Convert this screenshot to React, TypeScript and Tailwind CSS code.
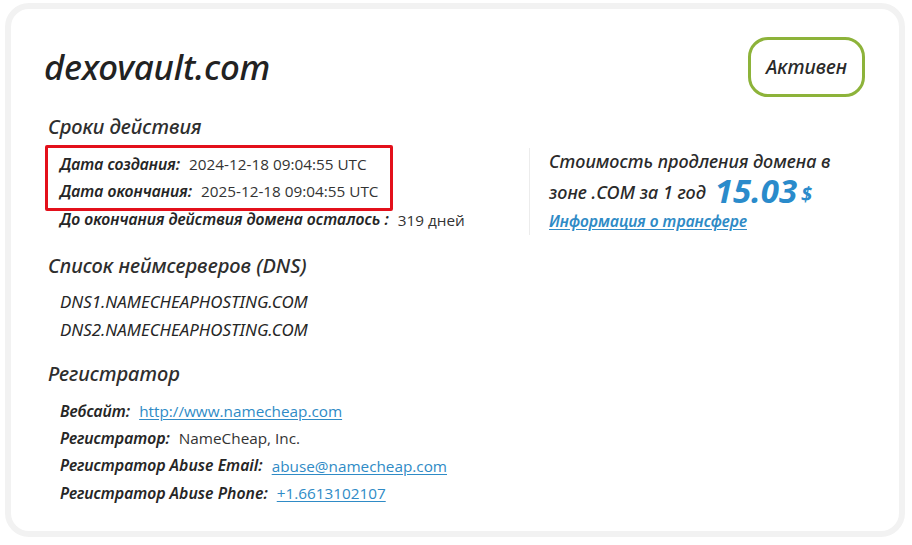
import React from "react";

type Row = { label: string; value: string; href?: boolean };

const labelCls =
  "font-['Noto_Sans',sans-serif] italic font-semibold text-[15.8px] text-[#262626]";
const valueCls = "font-['Open_Sans',sans-serif] text-[15.3px] text-[#333]";
const linkCls =
  "font-['Open_Sans',sans-serif] text-[15.3px] text-[#2f8bc6] underline underline-offset-2";

function InfoRow({ label, value, href, h = "h-[26px]" }: Row & { h?: string }) {
  return (
    <div className={`flex items-center gap-[9px] ${h}`}>
      <span className={labelCls}>{label}</span>
      {href ? (
        <a href="#" className={linkCls}>
          {value}
        </a>
      ) : (
        <span className={valueCls}>{value}</span>
      )}
    </div>
  );
}

function SectionTitle({ children }: { children: React.ReactNode }) {
  return (
    <h2 className="h-[28px] flex items-center font-['Noto_Sans',sans-serif] italic font-medium text-[20px] text-[#2e2e2e]">
      {children}
    </h2>
  );
}

const registrar: Row[] = [
  { label: "Вебсайт:", value: "http://www.namecheap.com", href: true },
  { label: "Регистратор:", value: "NameCheap, Inc." },
  { label: "Регистратор Abuse Email:", value: "abuse@namecheap.com", href: true },
  { label: "Регистратор Abuse Phone:", value: "+1.6613102107", href: true },
];

export default function App() {
  return (
    <div className="w-[912px] h-[545px] bg-white pt-[3px] pl-[5px]">
      <div className="w-[900px] h-[534px] rounded-[24px] border-[6px] border-[#f2f2f2] bg-white pl-[37px] pr-[34px] pt-[28px]">
        {/* шапка: домен и статус */}
        <div className="flex items-center justify-between h-[60px]">
          <h1 className="-ml-[4px] font-['Noto_Sans',sans-serif] italic font-medium text-[34.8px] text-[#222] tracking-[-0.2px]">
            dexovault.com
          </h1>
          <div className="w-[117px] h-[60px] rounded-[20px] border-[3px] border-[#8db33a] flex items-center justify-center font-['Noto_Sans',sans-serif] italic font-medium text-[19.5px] text-[#2a2a2a]">
            Активен
          </div>
        </div>

        <div className="flex mt-[16px]">
          {/* левая колонка */}
          <div className="w-[481px] flex-none">
            <SectionTitle>Сроки действия</SectionTitle>
            <div className="mt-[4px] -ml-[3px] w-[348px] border-[3px] border-[#e3101b] rounded-[2px] pl-[12px] py-[3px]">
              <InfoRow h="h-[27px]" label="Дата создания:" value="2024-12-18 09:04:55 UTC" />
              <InfoRow h="h-[27px]" label="Дата окончания:" value="2025-12-18 09:04:55 UTC" />
            </div>
            <div className="pl-[12px]">
              <InfoRow
                h="h-[18px]"
                label="До окончания действия домена осталось :"
                value="319 дней"
              />
            </div>

            <div className="mt-[23px]">
              <SectionTitle>Список неймсерверов (DNS)</SectionTitle>
            </div>
            <div className="mt-[8px] pl-[12px]">
              {["DNS1.NAMECHEAPHOSTING.COM", "DNS2.NAMECHEAPHOSTING.COM"].map((ns) => (
                <div
                  key={ns}
                  className="h-[28px] flex items-center font-['Noto_Sans',sans-serif] italic text-[16.9px] text-[#262626]"
                >
                  {ns}
                </div>
              ))}
            </div>

            <div className="mt-[16px]">
              <SectionTitle>Регистратор</SectionTitle>
            </div>
            <div className="mt-[10px] pl-[12px]">
              {registrar.map((r) => (
                <InfoRow key={r.label} h="h-[27.3px]" {...r} />
              ))}
            </div>
          </div>

          {/* правая колонка: цена продления */}
          <div className="mt-[35px] h-[87px] border-l border-[#ececec] pl-[19px]">
            <div className="h-[26px] flex items-center font-['Noto_Sans',sans-serif] italic font-medium text-[18px] text-[#2a2a2a]">
              Стоимость продления домена в
            </div>
            <div className="h-[32px] flex items-end font-['Noto_Sans',sans-serif] italic font-medium text-[18px] text-[#2a2a2a]">
              <span className="mb-[3px] leading-[22px]">зоне .COM за 1 год</span>
              <span className="ml-[9px] text-[33px] leading-[30px] font-bold text-[#2a8bcb]">15.03</span>
              <span className="ml-[4px] mb-[2px] text-[20px] leading-[20px] font-bold text-[#2a8bcb]">$</span>
            </div>
            <a
              href="#"
              className="mt-[4px] h-[24px] flex items-center font-['Noto_Sans',sans-serif] italic font-semibold text-[15.6px] text-[#2f8bc6] underline underline-offset-2"
            >
              Информация о трансфере
            </a>
          </div>
        </div>
      </div>
    </div>
  );
}
